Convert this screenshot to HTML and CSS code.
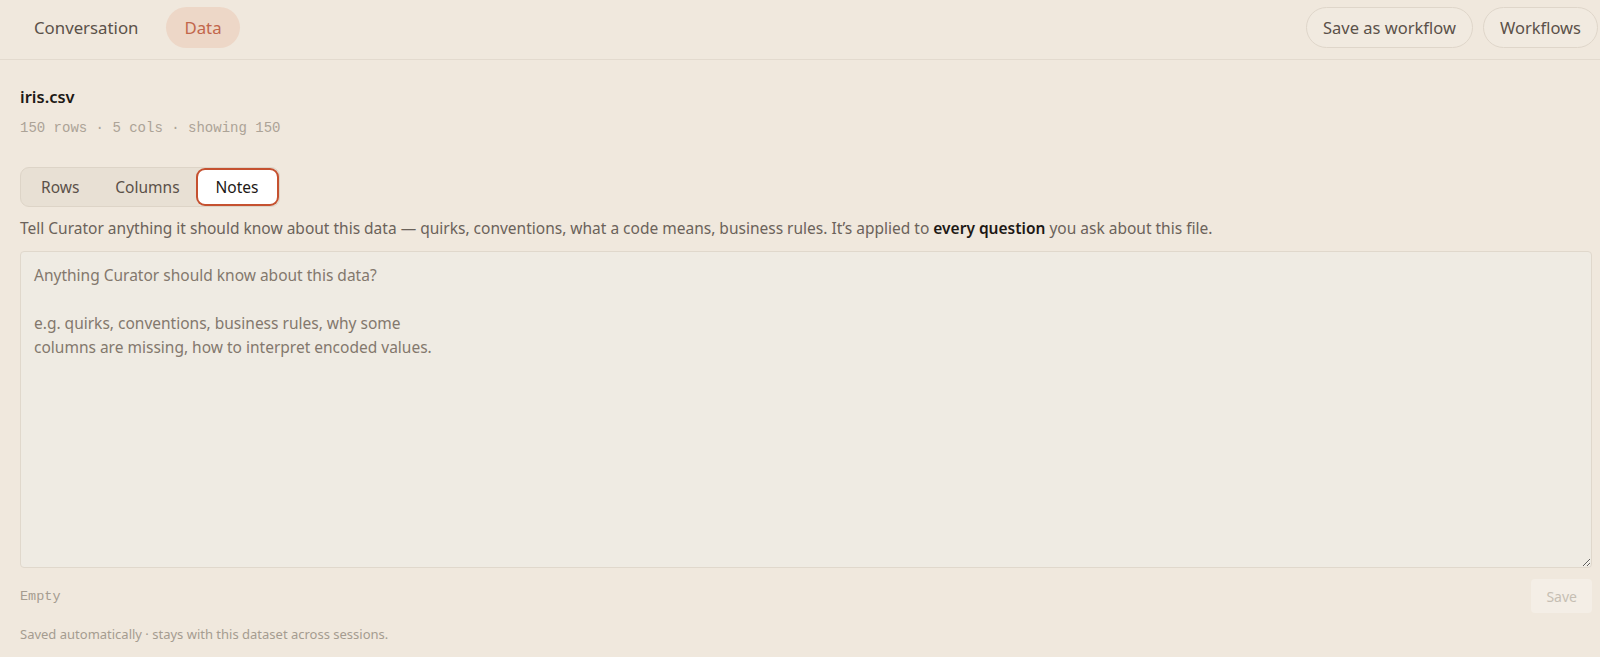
FILE: index.html
```html
<!DOCTYPE html>
<html lang="en">
<head>
<meta charset="utf-8">
<title>Curator — iris.csv</title>
<link rel="stylesheet" href="styles.css">
</head>
<body>
  <header class="topbar">
    <nav class="view-tabs">
      <a class="view-tab">Conversation</a>
      <a class="view-tab is-active">Data</a>
    </nav>
    <div class="topbar-actions">
      <button class="pill-btn">Save as workflow</button>
      <button class="pill-btn">Workflows</button>
    </div>
  </header>

  <main class="dataset">
    <h1 class="dataset-name">iris.csv</h1>
    <p class="dataset-meta">150 rows · 5 cols · showing 150</p>

    <div class="segmented">
      <button class="seg-btn">Rows</button>
      <button class="seg-btn">Columns</button>
      <button class="seg-btn is-active">Notes</button>
    </div>

    <p class="notes-help">Tell Curator anything it should know about this data — quirks, conventions, what a code means, business rules. It’s applied to <strong>every question</strong> you ask about this file.</p>

    <textarea class="notes-input" placeholder="Anything Curator should know about this data?

e.g. quirks, conventions, business rules, why some
columns are missing, how to interpret encoded values."></textarea>

    <div class="notes-footer">
      <span class="notes-status">Empty</span>
      <button class="save-btn" disabled>Save</button>
    </div>
    <p class="notes-hint">Saved automatically · stays with this dataset across sessions.</p>
  </main>
</body>
</html>
```

FILE: styles.css
```css
* { box-sizing: border-box; }

html, body {
  margin: 0;
  background: #f0e8dd;
  color: #2a231e;
  font-family: "Noto Sans", "Open Sans", sans-serif;
}

button {
  font-family: inherit;
  cursor: pointer;
}

/* Top bar */
.topbar {
  display: flex;
  align-items: flex-start;
  justify-content: space-between;
  height: 60px;
  padding: 7px 2px 0 16px;
  border-bottom: 1px solid #e3dace;
}

.view-tabs {
  display: flex;
  gap: 10px;
}

.view-tab {
  display: flex;
  align-items: center;
  height: 41px;
  padding: 0 18px;
  border-radius: 21px;
  font-size: 16.8px;
  color: #5b5149;
}

.view-tab.is-active {
  background: #edd7c7;
  color: #c2664b;
}

.topbar-actions {
  display: flex;
  gap: 10px;
}

.pill-btn {
  height: 41px;
  padding: 0 16px;
  border: 1px solid #dfd6ca;
  border-radius: 21px;
  background: #f1eae0;
  font-size: 16.5px;
  color: #5b5149;
}

/* Dataset view */
.dataset {
  padding: 0 8px 0 20px;
}

.dataset-name {
  margin: 26px 0 0;
  font-size: 16.5px;
  line-height: 22px;
  font-weight: 600;
  color: #1d1815;
}

.dataset-meta {
  margin: 10px 0 0;
  font-family: "Liberation Mono", "DejaVu Sans Mono", monospace;
  font-size: 14px;
  line-height: 20px;
  color: #aca397;
}

.segmented {
  display: inline-flex;
  margin-top: 29px;
  padding: 2px;
  border: 1px solid #ddd4c7;
  border-radius: 9px;
  background: #e8e0d4;
}

.seg-btn {
  height: 34px;
  padding: 0 18px;
  border: 0;
  border-radius: 7px;
  background: transparent;
  font-size: 15.5px;
  color: #5b5149;
}

.seg-btn.is-active {
  background: #ffffff;
  color: #1d1815;
  box-shadow: 0 0 0 2px #c55130;
}

.notes-help {
  margin: 11px 0 0;
  font-size: 15.5px;
  line-height: 21px;
  color: #6b625a;
}

.notes-help strong {
  font-weight: 600;
  color: #1d1815;
}

.notes-input {
  display: block;
  width: 100%;
  height: 317px;
  margin-top: 12px;
  padding: 11px 13px;
  border: 1px solid #e0d8cc;
  border-radius: 4px;
  background: #efebe3;
  font-family: inherit;
  font-size: 15.5px;
  line-height: 24px;
  color: #2a231e;
  resize: vertical;
}

.notes-input::placeholder {
  color: #83786d;
}

.notes-footer {
  display: flex;
  align-items: center;
  justify-content: space-between;
  margin-top: 11px;
}

.notes-status {
  font-family: "Liberation Mono", "DejaVu Sans Mono", monospace;
  font-size: 13.5px;
  color: #a59c90;
}

.save-btn {
  height: 34px;
  padding: 0 15px;
  border: 0;
  border-radius: 4px;
  background: #f4eee6;
  font-size: 14px;
  color: #c6beb3;
  cursor: default;
}

.notes-hint {
  margin: 13px 0 0;
  font-size: 13px;
  line-height: 16px;
  color: #a59c90;
}
```
